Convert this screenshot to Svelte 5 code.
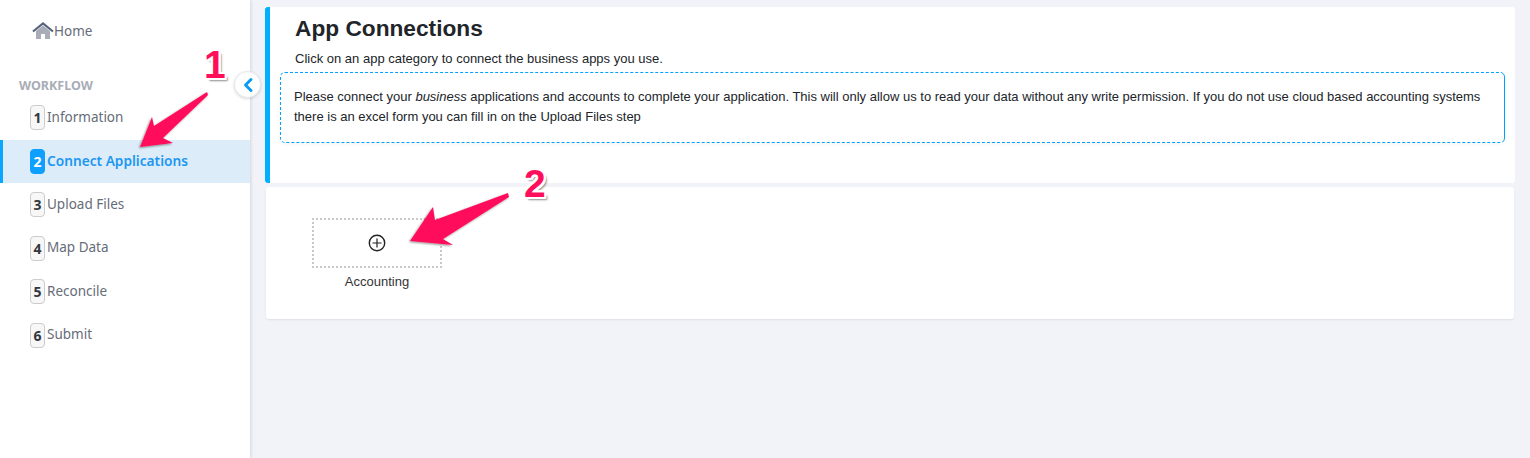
<script>
	const steps = ['Information', 'Connect Applications', 'Upload Files', 'Map Data', 'Reconcile', 'Submit']
	let active = 1
</script>

<div class="layout">
	<aside class="sidebar">
		<a class="home" href="#home">
			<svg width="22" height="18" viewBox="0 0 22 18">
				<path d="M4 9 11 3.500 18 9v8h-5v-5H9v5H4z" fill="#a9adb8" />
				<path d="M1 9.500 11 1.500l10 8" fill="none" stroke="#55647e" stroke-width="2.200" />
			</svg>
			<span>Home</span>
		</a>
		<div class="heading">WORKFLOW</div>
		<nav>
			{#each steps as step, i}
				<div class="step" class:active={i === active}>
					<span class="num">{i + 1}</span>
					<span class="label">{step}</span>
				</div>
			{/each}
		</nav>
		<button class="collapse" aria-label="Collapse">
			<svg width="14" height="16" viewBox="0 0 14 16">
				<path d="M10 2.500 4.500 8l5.500 5.500" fill="none" stroke="#0a9bf5" stroke-width="3" stroke-linecap="round" stroke-linejoin="round" />
			</svg>
		</button>
	</aside>

	<main>
		<section class="card intro">
			<h1>App Connections</h1>
			<p class="sub">Click on an app category to connect the business apps you use.</p>
			<div class="callout">
				Please connect your <em>business</em> applications and accounts to complete your application. This will only allow us to read your data without any write permission. If you do not use cloud based accounting systems there is an excel form you can fill in on the Upload Files step
			</div>
		</section>
		<section class="card apps">
			<div class="app">
				<div class="tile">
					<svg width="18" height="18" viewBox="0 0 18 18">
						<circle cx="9" cy="9" r="7.700" fill="none" stroke="#222" stroke-width="1.400" />
						<path d="M9 4.500v9M4.500 9h9" stroke="#222" stroke-width="1.200" />
					</svg>
				</div>
				<div class="app-name">Accounting</div>
			</div>
		</section>
	</main>

	<!-- screenshot annotations -->
	<svg class="arrow" width="1530" height="458" viewBox="0 0 1530 458">
		<defs>
			<filter id="sh" x="-20%" y="-20%" width="140%" height="140%">
				<feDropShadow dx="-1" dy="1" stdDeviation="1" flood-color="#000" flood-opacity="0.45" />
			</filter>
		</defs>
		<polygon points="207,92 208,95 163,138 173,143 140,147 152,117 154,126" fill="#ff0f5b" filter="url(#sh)" />
		<polygon points="508,193 509,197 443,239 453,245 410,241 433,207 435,220" fill="#ff0f5b" filter="url(#sh)" />
	</svg>
	<span class="mark one">1</span>
	<span class="mark two">2</span>
</div>

<style>
	:global(body) {
		margin: 0;
		background: #f1f3f8;
	}
	.layout {
		position: relative;
		display: flex;
		height: 458px;
		overflow: hidden;
		font-family: "Liberation Sans", Arial, sans-serif;
	}
	.sidebar {
		position: relative;
		box-sizing: border-box;
		width: 250px;
		flex: none;
		background: #fff;
		box-shadow: 1px 0 3px rgba(0, 0, 0, 0.12);
		font-family: "Noto Sans", sans-serif;
		padding-top: 21px;
	}
	.home {
		display: flex;
		align-items: center;
		margin-left: 32px;
		color: #666c78;
		font-size: 13.500px;
		text-decoration: none;
		height: 20px;
	}
	.heading {
		margin: 35px 0 0 19px;
		font-size: 12.500px;
		font-weight: 700;
		color: #a8adb7;
		line-height: 20px;
	}
	.step {
		display: flex;
		align-items: center;
		gap: 2px;
		box-sizing: border-box;
		height: 43.500px;
		padding-left: 30px;
		color: #666c78;
		font-size: 13.500px;
	}
	.label {
		position: relative;
		top: -1px;
	}
	.num {
		box-sizing: border-box;
		width: 15px;
		height: 25px;
		display: flex;
		align-items: center;
		justify-content: center;
		border: 1px solid #ccc;
		border-radius: 4px;
		background: #f7f7f7;
		color: #33373f;
		font-weight: 700;
		font-size: 14px;
	}
	.step.active {
		background: #dcecf8;
		border-left: 3px solid #0aa5ff;
		padding-left: 27px;
		color: #1c97f3;
		font-weight: 600;
		font-size: 13.700px;
	}
	.step.active .num {
		background: #0e9fff;
		border-color: #0e9fff;
		color: #fff;
	}
	.collapse {
		position: absolute;
		left: 234px;
		top: 71px;
		width: 27px;
		height: 27px;
		padding: 0;
		display: flex;
		align-items: center;
		justify-content: center;
		border: 1px solid #e6e8ee;
		border-radius: 50%;
		background: #fff;
		box-shadow: 0 1px 3px rgba(0, 0, 0, 0.15);
	}
	main {
		flex: 1;
		min-width: 0;
		padding: 7px 15px 0 15px;
		display: flex;
		flex-direction: column;
		gap: 4px;
		color: #212121;
	}
	.card {
		background: #fff;
		border-radius: 3px;
	}
	.intro {
		box-sizing: border-box;
		height: 176px;
		border-left: 5px solid #00b0ff;
		padding: 7px 10px 0 10px;
	}
	h1 {
		margin: 0 0 0 15px;
		font-size: 22.700px;
		line-height: 28px;
		font-weight: 700;
		color: #212529;
	}
	.sub {
		margin: 10px 0 0 15px;
		font-size: 13px;
		line-height: 14px;
		color: #212529;
	}
	.callout {
		box-sizing: border-box;
		height: 71px;
		margin-top: 6px;
		padding: 14px 13px 0;
		border: 1px dashed #00a2ff;
		border-right-style: solid;
		border-radius: 5px;
		font-size: 13px;
		line-height: 19.500px;
		color: #212529;
		box-shadow: 0 1px 4px rgba(0, 0, 0, 0.06);
	}
	.apps {
		height: 132px;
		margin: 0 1px;
		padding: 31px 0 0 46px;
		box-sizing: border-box;
		box-shadow: 0 1px 2px rgba(0, 0, 0, 0.08);
	}
	.app {
		width: 130px;
		text-align: center;
	}
	.tile {
		box-sizing: border-box;
		height: 50px;
		display: flex;
		align-items: center;
		justify-content: center;
		border: 2px dotted #c8c8c8;
	}
	.app-name {
		margin-top: 6px;
		font-size: 13px;
		line-height: 15px;
		color: #333;
	}
	.arrow {
		position: absolute;
		left: 0;
		top: 0;
		pointer-events: none;
	}
	.mark {
		position: absolute;
		font-family: "Liberation Sans", Arial, sans-serif;
		font-weight: 700;
		font-size: 39px;
		line-height: 44px;
		color: #ff0f5b;
		text-shadow: 2px 0 0 #fff, -2px 0 0 #fff, 0 2px 0 #fff, 0 -2px 0 #fff, 2px 2px 0 #fff, -2px -2px 0 #fff, 2px -2px 0 #fff, -2px 2px 0 #fff, 3px 3px 2px rgba(0, 0, 0, 0.45);
	}
	.one {
		left: 204px;
		top: 43px;
	}
	.two {
		left: 524px;
		top: 162px;
	}
</style>
